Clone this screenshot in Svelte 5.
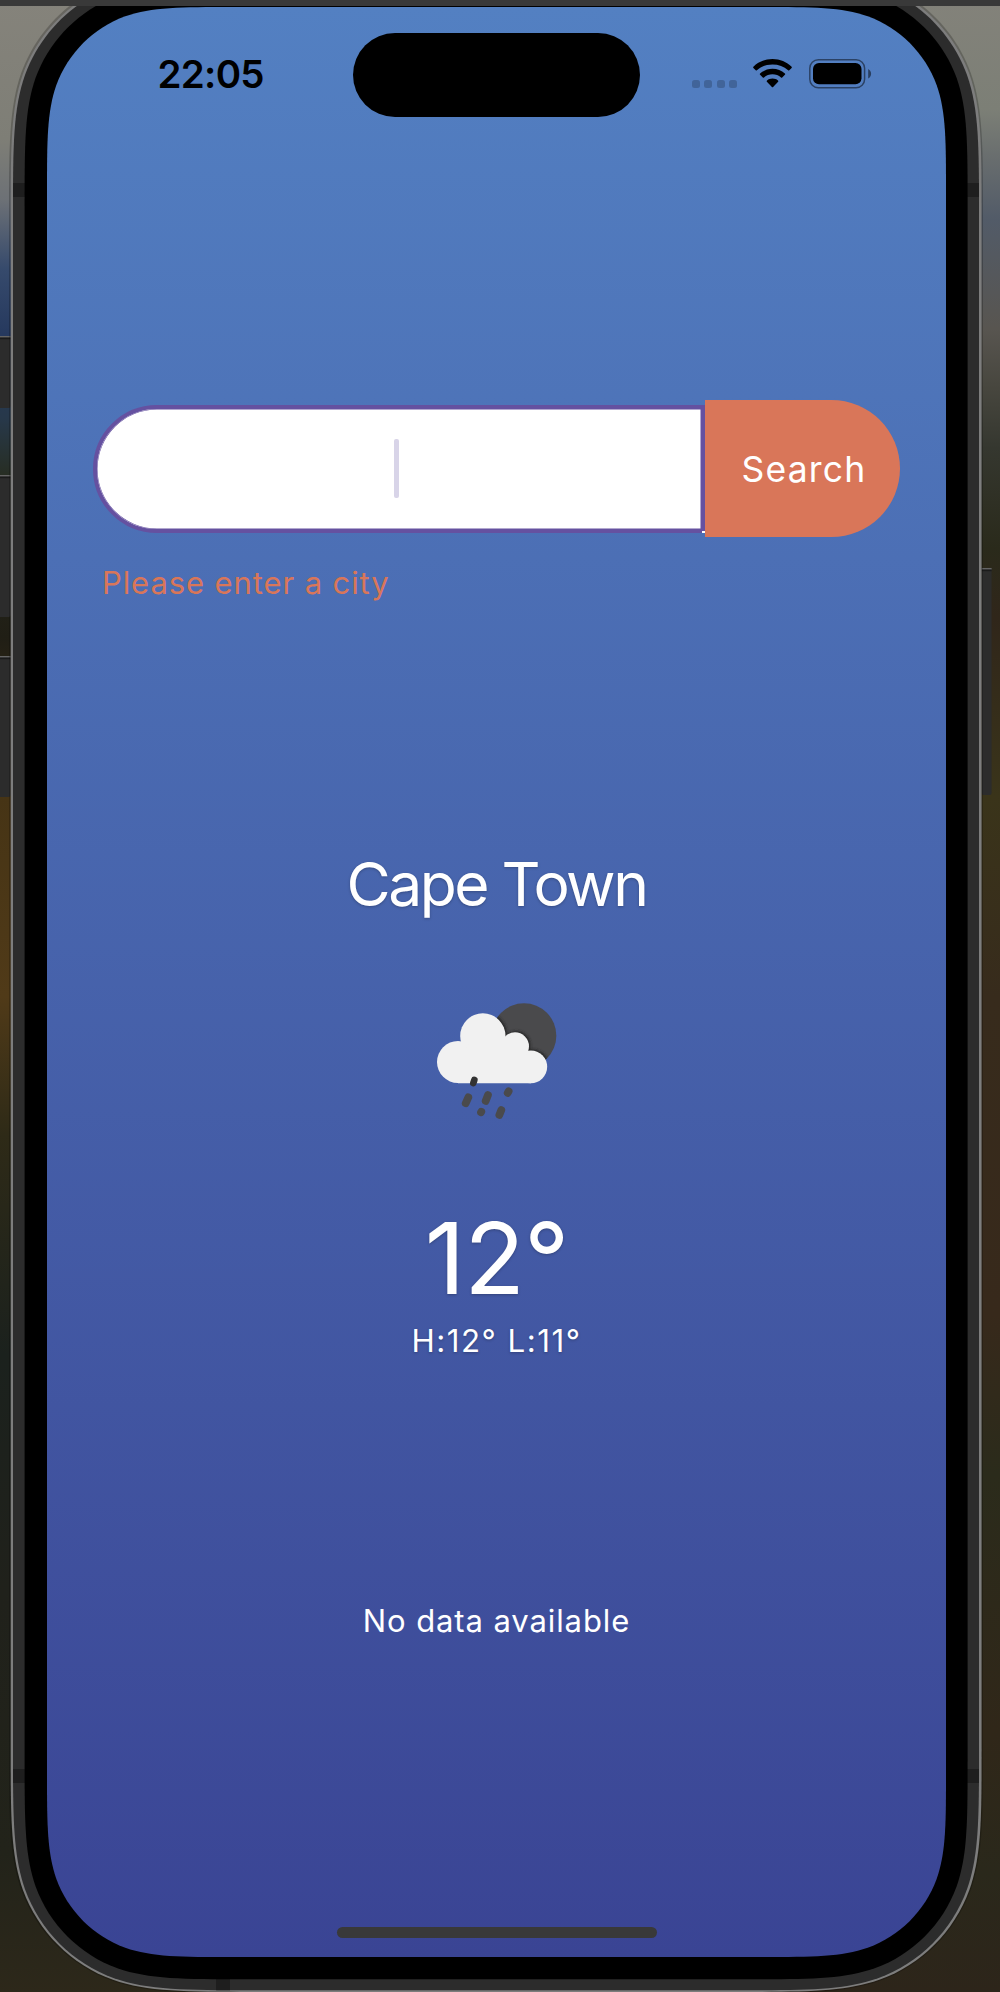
<script>
  // Rounded rectangle with continuous (squircle-like) corners.
  function squircle(x0, y0, x1, y1, r) {
    const a = 1.5 * r, b = 1.08 * r, c = 0.845 * r;
    const d = 0.63149399 * r, e = 0.074911 * r, f = 0.37282392 * r, g = 0.16905899 * r;
    return [
      `M${x0 + a} ${y0}H${x1 - a}`,
      `C${x1 - b} ${y0} ${x1 - c} ${y0} ${x1 - d} ${y0 + e}`,
      `C${x1 - f} ${y0 + g} ${x1 - g} ${y0 + f} ${x1 - e} ${y0 + d}`,
      `C${x1} ${y0 + c} ${x1} ${y0 + b} ${x1} ${y0 + a}`,
      `V${y1 - a}`,
      `C${x1} ${y1 - b} ${x1} ${y1 - c} ${x1 - e} ${y1 - d}`,
      `C${x1 - g} ${y1 - f} ${x1 - f} ${y1 - g} ${x1 - d} ${y1 - e}`,
      `C${x1 - c} ${y1} ${x1 - b} ${y1} ${x1 - a} ${y1}`,
      `H${x0 + a}`,
      `C${x0 + b} ${y1} ${x0 + c} ${y1} ${x0 + d} ${y1 - e}`,
      `C${x0 + f} ${y1 - g} ${x0 + g} ${y1 - f} ${x0 + e} ${y1 - d}`,
      `C${x0} ${y1 - c} ${x0} ${y1 - b} ${x0} ${y1 - a}`,
      `V${y0 + a}`,
      `C${x0} ${y0 + b} ${x0} ${y0 + c} ${x0 + e} ${y0 + d}`,
      `C${x0 + g} ${y0 + f} ${x0 + f} ${y0 + g} ${x0 + d} ${y0 + e}`,
      `C${x0 + c} ${y0} ${x0 + b} ${y0} ${x0 + a} ${y0}Z`
    ].join('');
  }

  const halo = squircle(9, -30, 983, 1993, 163);
  const rim = squircle(10.7, -28, 981.6, 1992, 162);
  const body = squircle(13, -26, 979, 1990.3, 160);
  const bezel = squircle(24.6, -15, 967.6, 1979.3, 147);
  const glass = squircle(47, 7, 946, 1957, 124);

  const sideButtons = [
    { x: -4, y: 336, w: 14.7, h: 72 },
    { x: -4, y: 475, w: 14.7, h: 142 },
    { x: -4, y: 656, w: 14.7, h: 141 },
    { x: 981.6, y: 568, w: 10, h: 227 }
  ];

  const weather = { city: 'Cape Town', temp: 12, high: 12, low: 11 };
</script>

<div class="stage">
  <svg class="frame" viewBox="0 0 1000 1992" width="1000" height="1992" aria-hidden="true">
    <defs>
      <linearGradient id="wallL" gradientUnits="userSpaceOnUse" x1="0" y1="0" x2="0" y2="1992">
        <stop offset="0" stop-color="#85837b" />
        <stop offset=".07" stop-color="#7e7e76" />
        <stop offset=".1" stop-color="#6d7176" />
        <stop offset=".135" stop-color="#364a6c" />
        <stop offset=".168" stop-color="#26395e" />
        <stop offset=".21" stop-color="#27384a" />
        <stop offset=".24" stop-color="#272d21" />
        <stop offset=".32" stop-color="#201e15" />
        <stop offset=".4" stop-color="#463415" />
        <stop offset=".5" stop-color="#503a18" />
        <stop offset=".57" stop-color="#2e2a17" />
        <stop offset=".68" stop-color="#1b211d" />
        <stop offset=".8" stop-color="#20211b" />
        <stop offset=".93" stop-color="#22231a" />
        <stop offset="1" stop-color="#2d281a" />
      </linearGradient>
      <linearGradient id="wallR" gradientUnits="userSpaceOnUse" x1="0" y1="0" x2="0" y2="1992">
        <stop offset="0" stop-color="#83827a" />
        <stop offset=".055" stop-color="#7c7f76" />
        <stop offset=".08" stop-color="#686d6e" />
        <stop offset=".11" stop-color="#525b68" />
        <stop offset=".165" stop-color="#585550" />
        <stop offset=".195" stop-color="#47463e" />
        <stop offset=".225" stop-color="#35372f" />
        <stop offset=".275" stop-color="#2a2a1b" />
        <stop offset=".31" stop-color="#30261a" />
        <stop offset=".4" stop-color="#3a341a" />
        <stop offset=".5" stop-color="#372b1c" />
        <stop offset=".66" stop-color="#37291b" />
        <stop offset=".74" stop-color="#2b2b1b" />
        <stop offset=".87" stop-color="#302719" />
        <stop offset=".94" stop-color="#2a281b" />
        <stop offset="1" stop-color="#2d251a" />
      </linearGradient>
      <linearGradient id="sky" x1="0" y1="0" x2="0" y2="1">
        <stop offset="0" stop-color="#5380c2" />
        <stop offset="1" stop-color="#3a4494" />
      </linearGradient>
      <clipPath id="bodyClip"><path d={body} /></clipPath>
    </defs>

    <rect width="500" height="1992" fill="url(#wallL)" />
    <rect x="500" width="500" height="1992" fill="url(#wallR)" />

    {#each sideButtons as b}
      <rect x={b.x} y={b.y} width={b.w} height={b.h} rx="2" fill="#2c2c2c" />
      <rect x={b.x} y={b.y} width={b.w} height="1.6" fill="#646464" />
      <rect x={b.x} y={b.y + 1.6} width={b.w} height="1.6" fill="#1b1b1b" />
    {/each}

    <path d={halo} fill="#000" opacity=".22" />
    <path d={rim} fill="#7d7d7d" />
    <path d={body} fill="#2c2c2c" />
    <g clip-path="url(#bodyClip)" fill="#1e1e1e">
      <rect y="183" width="1000" height="14" />
      <rect y="1769" width="1000" height="14" />
      <rect x="216" y="1970" width="14" height="22" />
    </g>
    <path d={bezel} fill="#000" />
    <path d={glass} fill="url(#sky)" />
    <rect width="1000" height="6" fill="#393939" />
  </svg>

  <main class="screen">
    <header class="status">
      <time class="clock">22:05</time>
      <div class="island"></div>
      <div class="indicators">
        <div class="dots"><i></i><i></i><i></i><i></i></div>
        <svg class="wifi" viewBox="0 0 39 29" width="39" height="29" aria-label="Wi-Fi">
          <path d="M19.5 0C27 0 33.700 2.900 38.600 7.700Q39.200 8.300 38.600 8.900L36.300 11.200Q35.700 11.800 35.100 11.200C31 7.300 25.500 5.500 19.500 5.500S8 7.300 3.900 11.200Q3.300 11.800 2.700 11.200L.400 8.900Q-.200 8.300.400 7.700C5.300 2.900 12 0 19.500 0Z" />
          <path d="M19.500 9.700C24.200 9.700 28.600 11.500 31.900 14.600Q32.500 15.200 31.900 15.800L29.200 18.400Q28.600 19 28 18.400C25.700 16.300 22.700 15.300 19.500 15.300S13.300 16.300 11 18.400Q10.400 19 9.800 18.400L7.100 15.800Q6.500 15.200 7.100 14.600C10.400 11.500 14.800 9.700 19.500 9.700Z" />
          <path d="M19.500 19.500C21.600 19.500 23.500 20.200 25 21.400Q25.700 22 25.100 22.700L20.100 28Q19.500 28.600 18.900 28L13.900 22.700Q13.300 22 14 21.400C15.500 20.200 17.400 19.500 19.500 19.500Z" />
        </svg>
        <svg class="battery" viewBox="0 0 63 30" width="63" height="30" aria-label="Battery">
          <rect x=".8" y=".8" width="54.800" height="27.900" rx="8.500" fill="none" stroke="#000" stroke-width="1.500" opacity=".48" />
          <rect x="4" y="4" width="48.500" height="21.300" rx="6" />
          <path d="M59.200 10C61 11 62.100 12.700 62.100 14.800S61 18.600 59.200 19.600Z" opacity=".5" />
        </svg>
      </div>
    </header>

    <form class="search" onsubmit={(e) => e.preventDefault()}>
      <div class="field" role="textbox" aria-label="City"><span class="caret"></span></div>
      <button type="submit">Search</button>
    </form>
    <p class="hint">Please enter a city</p>

    <section class="current">
      <h1>{weather.city}</h1>
      <svg class="glyph" viewBox="300 450 400 390" width="133.330" height="130" aria-label="Rain showers">
        <defs>
          <clipPath id="sunClip"><circle cx="582" cy="572" r="97" /></clipPath>
          <filter id="soft" x="-10%" y="-10%" width="120%" height="120%"><feGaussianBlur stdDeviation="4" /></filter>
          <g id="cloud">
            <circle cx="458.500" cy="573" r="68" />
            <circle cx="384" cy="651" r="63" />
            <circle cx="555" cy="604" r="42" />
            <circle cx="602.500" cy="665.500" r="49" />
            <path d="M384 714.400H603V645L560 592H420L384 645Z" />
          </g>
        </defs>
        <circle cx="582" cy="572" r="97" fill="#4a4a4c" />
        <g clip-path="url(#sunClip)"><use href="#cloud" x="4" y="-3" fill="#222" filter="url(#soft)" /></g>
        <use href="#cloud" fill="#f1f1f1" />
        <g stroke="#4a4a4c" stroke-width="23" stroke-linecap="round">
          <path d="M415 757L407 775M474 750L467 768M536 739L533 744M514 795L508 810M454 800L453 802" />
          <path d="M433 705L430 714" stroke="#333" stroke-width="20" />
        </g>
      </svg>
      <p class="temp">{weather.temp}°</p>
      <p class="range">H:{weather.high}° L:{weather.low}°</p>
    </section>

    <p class="empty">No data available</p>
    <div class="home"></div>
  </main>
</div>

<style>
  :global(body) {
    margin: 0;
    background: #222;
  }
  .stage {
    position: relative;
    width: 1000px;
    height: 1992px;
    overflow: hidden;
    font-family: Inter, 'Liberation Sans', sans-serif;
    color: #fff;
  }
  .frame {
    position: absolute;
    inset: 0;
    display: block;
  }
  .screen {
    position: relative;
    box-sizing: border-box;
    width: 899px;
    height: 1950px;
    margin-left: 47px;
    top: 7px;
    display: flex;
    flex-direction: column;
  }
  p,
  h1 {
    margin: 0;
    line-height: 1;
    font-weight: 400;
    white-space: nowrap;
  }
  .status {
    display: grid;
    grid-template-columns: 306px 287px 306px;
    height: 84.500px;
    margin-top: 25.500px;
    color: #000;
  }
  .clock {
    padding: 22.500px 0 0 110.500px;
    font-size: 38.500px;
    line-height: 1;
    font-weight: 600;
    letter-spacing: -0.700px;
  }
  .island {
    background: #000;
    border-radius: 43px;
  }
  .indicators {
    display: flex;
    align-items: flex-start;
    padding: 26.500px 0 0 52px;
  }
  .dots {
    display: flex;
    gap: 4.300px;
    margin: 20.500px 16.500px 0 0;
  }
  .dots i {
    width: 8px;
    height: 8px;
    border-radius: 2.500px;
    background: rgba(0, 0, 0, 0.2);
  }
  .battery {
    margin-left: 17px;
  }
  .search {
    display: flex;
    align-items: center;
    height: 137px;
    margin: 283px 46px 0 46px;
  }
  .field {
    position: relative;
    box-sizing: border-box;
    width: 612px;
    height: 128px;
    display: flex;
    align-items: center;
    justify-content: center;
    background: #fff;
    border: 4px solid #6551a0;
    border-radius: 64px 0 0 64px;
    box-shadow: inset 0 0 0 0.500px #6551a0;
  }
  .field::after {
    content: '';
    position: absolute;
    right: -4px;
    bottom: -4px;
    width: 3px;
    height: 2px;
    background: #fff;
  }
  .caret {
    width: 5px;
    height: 59px;
    margin-right: 5px;
    border-radius: 2px;
    background: #d8d4e8;
  }
  button {
    width: 195px;
    height: 137px;
    padding: 2px 0 0 3px;
    border: 0;
    border-radius: 0 68.500px 68.500px 0;
    background: #d97659;
    color: #fff;
    font: 400 35.500px/1 Inter, 'Liberation Sans', sans-serif;
    letter-spacing: 1.200px;
  }
  .hint {
    margin: 30px 0 0 55px;
    color: #d97659;
    font-size: 31px;
    letter-spacing: 0.900px;
  }
  .current {
    display: flex;
    flex-direction: column;
    align-items: center;
    margin-top: 255.500px;
    text-shadow: 0 1px 3px rgba(0, 0, 0, 0.25);
  }
  h1 {
    font-size: 60.500px;
    letter-spacing: -2.500px;
  }
  .glyph {
    margin-top: 81px;
  }
  .temp {
    margin-top: 83.500px;
    font-size: 99.500px;
    letter-spacing: -1px;
  }
  .range {
    margin-top: 18px;
    font-size: 31.300px;
    letter-spacing: 1.500px;
  }
  .empty {
    margin-top: 248px;
    text-align: center;
    font-size: 31px;
    letter-spacing: 0.900px;
  }
  .home {
    width: 320px;
    height: 11.500px;
    margin: auto auto 18.700px;
    border-radius: 6px;
    background: #393939;
  }
</style>
